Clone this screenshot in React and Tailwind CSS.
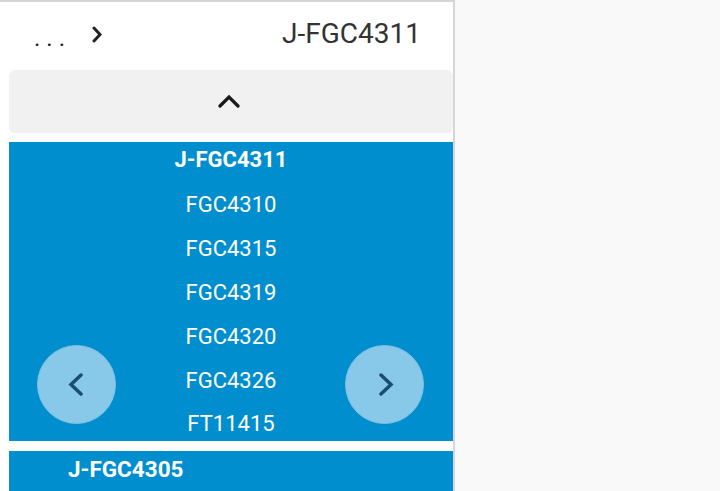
import React from 'react'

const items = ['FGC4310', 'FGC4315', 'FGC4319', 'FGC4320', 'FGC4326', 'FT11415']

const Chevron = ({ d, w, h, sw = 3, className = '' }) => (
  <svg width={w} height={h} viewBox={`0 0 ${w} ${h}`} className={className} fill="none" stroke="currentColor" strokeWidth={sw} strokeLinecap="round" strokeLinejoin="miter">
    <path d={d} />
  </svg>
)

const App = () => {
  return (
    <div className="w-[720px] h-[491px] flex bg-[#f9f9f9] overflow-hidden" style={{ fontFamily: 'Roboto, "Liberation Sans", sans-serif' }}>
      <div className="w-[455px] h-full bg-white border-r-2 border-t-2 border-[#d6d6d6] flex flex-col">
        <div className="h-[66px] flex items-center pl-[34px] pr-[32px] shrink-0">
          <span className="text-[24px] tracking-[6px] text-[#222] mt-[6px]">...</span>
          <Chevron d="M2 2l6 6.5L2 15" w={11} h={17} className="ml-[21px] -mt-[1px] text-[#222]" />
          <span className="ml-auto text-[28px] text-[#333] -mt-[3px]">J-FGC4311</span>
        </div>
        <div className="ml-[9px] mt-[2px] h-[63px] bg-[#f1f1f1] rounded-md flex items-center justify-center shrink-0">
          <Chevron d="M2 13L11 4l9 9" w={22} h={16} className="text-[#1a1a1a] -ml-[4px] -mt-[2px]" sw={3.2} />
        </div>
        <div className="ml-[9px] mt-[9px] h-[299px] bg-[#008ecf] relative overflow-hidden shrink-0">
          <div className="flex flex-col items-center text-white text-[22px]">
            <div className="h-[32px] mt-[1px] mb-[8px] flex items-center font-bold">J-FGC4311</div>
            {items.map((it) => (
              <div key={it} className="h-[43.8px] flex items-center">{it}</div>
            ))}
          </div>
          <button className="absolute left-[28px] top-[203px] w-[79px] h-[79px] rounded-full bg-[#88c8e8] border border-[#7fc0e2] flex items-center justify-center text-[#1b4d70]">
            <Chevron d="M13 2L3 11.5 13 21" w={16} h={23} sw={3.5} className="-ml-[2px]" />
          </button>
          <button className="absolute right-[29px] top-[203px] w-[79px] h-[79px] rounded-full bg-[#88c8e8] border border-[#7fc0e2] flex items-center justify-center text-[#1b4d70]">
            <Chevron d="M3 2l10 9.5L3 21" w={16} h={23} sw={3.5} className="ml-[2px]" />
          </button>
        </div>
        <div className="ml-[9px] mt-[10px] flex-1 bg-[#008ecf] pl-[59px] pt-[2px]">
          <span className="text-white text-[22.5px] font-bold">J-FGC4305</span>
        </div>
      </div>
    </div>
  )
}

export default App
